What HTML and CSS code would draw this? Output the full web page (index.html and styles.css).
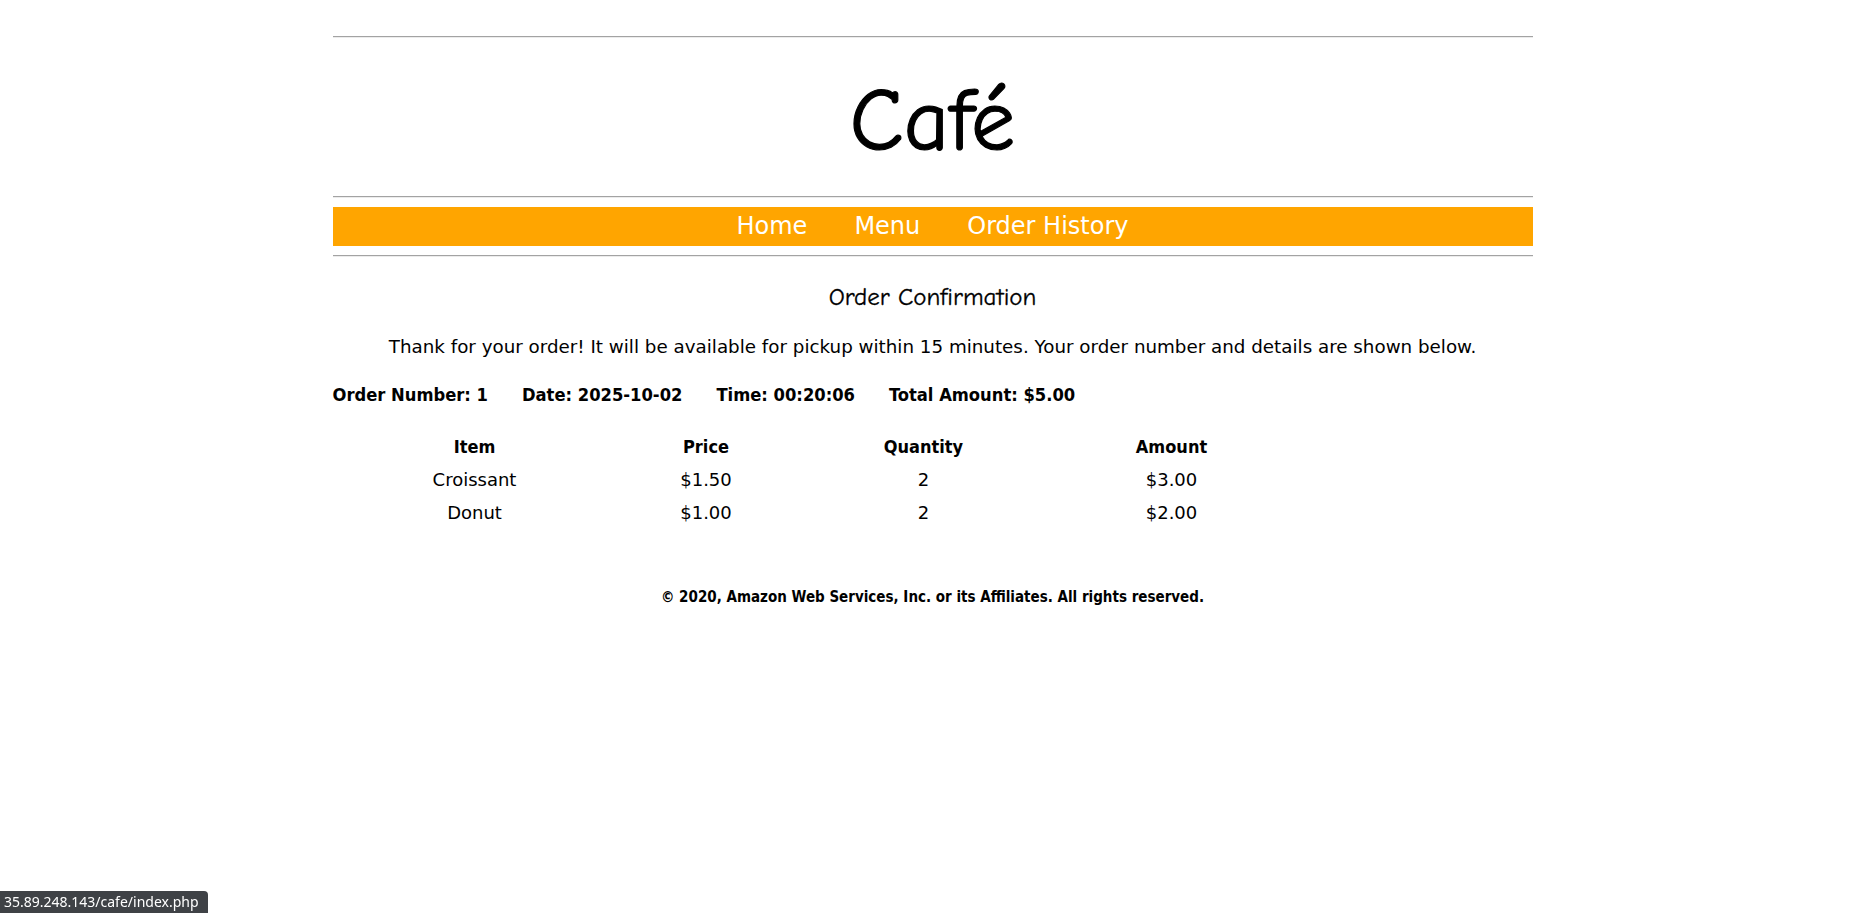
FILE: index.html
```html
<!DOCTYPE html>
<html lang="en">
<head>
<meta charset="utf-8">
<title>Café - Order Confirmation</title>
<link rel="stylesheet" href="styles.css">
</head>
<body>
<div class="page">
  <hr class="rule">
  <header class="masthead">
    <h1 class="title">Café</h1>
  </header>
  <hr class="rule">
  <nav class="nav">
    <a class="nav-link" href="#">Home</a>
    <a class="nav-link" href="#">Menu</a>
    <a class="nav-link" href="#">Order History</a>
  </nav>
  <hr class="rule rule-nav">
  <h2 class="heading">Order Confirmation</h2>
  <p class="lead">Thank for your order! It will be available for pickup within 15 minutes. Your order number and details are shown below.</p>
  <div class="summary">
    <span class="summary-item">Order Number: 1</span>
    <span class="summary-item">Date: 2025-10-02</span>
    <span class="summary-item">Time: 00:20:06</span>
    <span class="summary-item">Total Amount: $5.00</span>
  </div>
  <table class="items">
    <colgroup>
      <col class="c1"><col class="c2"><col class="c3"><col class="c4">
    </colgroup>
    <thead>
      <tr><th>Item</th><th>Price</th><th>Quantity</th><th>Amount</th></tr>
    </thead>
    <tbody>
      <tr><td>Croissant</td><td>$1.50</td><td>2</td><td>$3.00</td></tr>
      <tr><td>Donut</td><td>$1.00</td><td>2</td><td>$2.00</td></tr>
    </tbody>
  </table>
  <footer class="footer">© 2020, Amazon Web Services, Inc. or its Affiliates. All rights reserved.</footer>
</div>
<div class="status">35.89.248.143/cafe/index.php</div>
</body>
</html>
```
FILE: styles.css
```css
html, body {
  margin: 0;
  padding: 0;
  background: #ffffff;
}
body {
  font-family: "DejaVu Sans", "Lucida Sans", Verdana, sans-serif;
  color: #000;
}
.page {
  width: 1200px;
  margin: 0 auto;
  padding-top: 36px;
}
.rule {
  margin: 0;
  height: 0;
  border: 0;
  border-top: 1px solid #a3a3a3;
  border-bottom: 1px solid #ececec;
}
.masthead {
  height: 158px;
  box-sizing: border-box;
  padding-top: 10px;
  display: flex;
  align-items: center;
  justify-content: center;
}
.title {
  margin: 0;
  font-family: "Comic Sans MS", "Comic Neue", cursive;
  font-weight: normal;
  font-size: 88px;
  line-height: 1;
  -webkit-text-stroke: 1.2px #000;
}
.nav {
  margin-top: 9px;
  height: 39px;
  background: #ffa500;
  display: flex;
  align-items: center;
  justify-content: center;
  gap: 47px;
}
.nav-link {
  color: #fff;
  text-decoration: none;
  font-size: 24px;
  line-height: 1;
  margin-top: -2px;
}
.rule-nav {
  margin-top: 9px;
}
.heading {
  margin: 25px 0 0;
  text-align: center;
  font-family: "Comic Sans MS", "Comic Neue", cursive;
  font-weight: normal;
  font-size: 25px;
  line-height: 30px;
  -webkit-text-stroke: 0.3px #000;
}
.lead {
  margin: 20px 0 0;
  text-align: center;
  font-size: 18.3px;
  line-height: 30px;
}
.summary {
  margin-top: 18px;
  display: flex;
  gap: 34px;
  font-family: "DejaVu Sans Condensed", "DejaVu Sans", sans-serif;
  font-weight: bold;
  font-size: 18.2px;
  line-height: 30px;
}
.items {
  margin: 20px 0 0 26px;
  border-collapse: collapse;
  table-layout: fixed;
  width: 959px;
}
.c1 { width: 232px; }
.c2 { width: 231px; }
.c3 { width: 204px; }
.c4 { width: 292px; }
.items th, .items td {
  padding: 0;
  height: 33px;
  text-align: center;
  font-size: 18px;
}
.items th {
  font-family: "DejaVu Sans Condensed", "DejaVu Sans", sans-serif;
  font-weight: bold;
}
.footer {
  margin-top: 53px;
  text-align: center;
  font-family: "DejaVu Sans Condensed", "DejaVu Sans", sans-serif;
  font-weight: bold;
  font-size: 15px;
  line-height: 30px;
}
.status {
  position: fixed;
  left: 0;
  bottom: 0;
  height: 22px;
  padding: 0 9px 0 4px;
  background: #3f4246;
  color: #fff;
  font-family: "Noto Sans", "Open Sans", sans-serif;
  font-size: 14px;
  line-height: 22px;
  border-top-right-radius: 4px;
}
```
